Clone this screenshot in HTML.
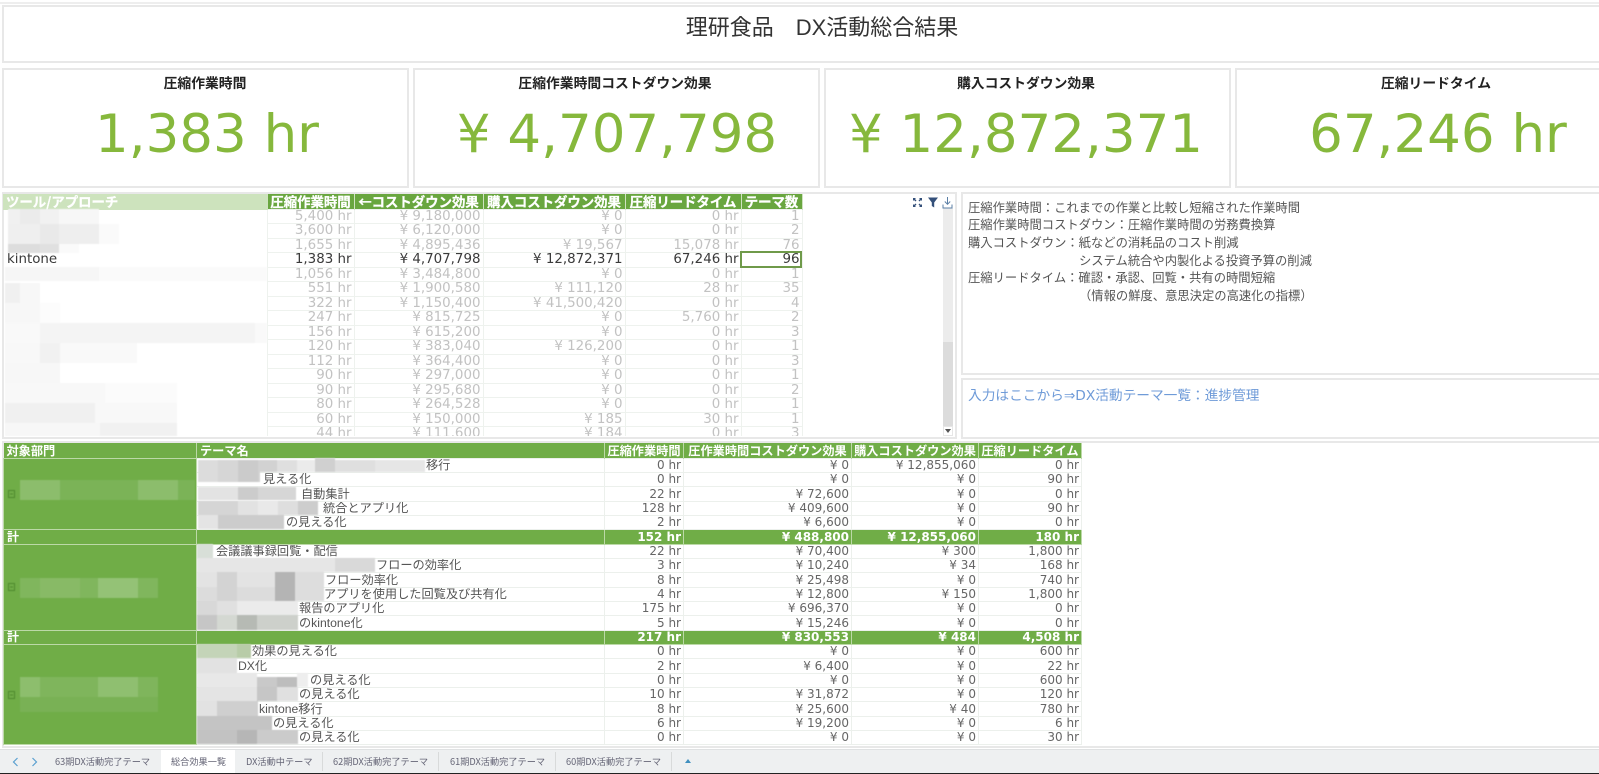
<!DOCTYPE html>
<html lang="ja"><head><meta charset="utf-8"><title>理研食品 DX活動総合結果</title>
<style>
html,body{margin:0;padding:0;width:1599px;height:774px;overflow:hidden;background:#fff;}
body{position:relative;font-family:"DejaVu Sans","Noto Sans CJK JP",sans-serif;color:#555;}
.a{position:absolute;box-sizing:border-box;}
.box{border:2px solid #e8e8e8;background:#fff;}
.kt{position:absolute;font:bold 13.8px "Liberation Sans","Noto Sans CJK JP",sans-serif;color:#222;text-align:center;top:72px;white-space:nowrap;transform:translateX(-50%);}
.kv{position:absolute;font-size:53px;line-height:60px;color:#86b83c;top:105px;white-space:nowrap;transform:translateX(-50%);}
table{border-collapse:collapse;table-layout:fixed;position:absolute;}
td,th{padding:0 2px 0 0;overflow:hidden;white-space:nowrap;box-sizing:border-box;}
#t1{left:3px;top:0;width:799px;font-size:13.4px;color:#c2c2c2;}
#t1 th{background:#69a63f;color:#fff;font:bold 13.4px "Noto Sans CJK JP",sans-serif;height:15px;line-height:15px;text-align:center;padding:0;border-right:1px solid #cfe3c0;-webkit-text-stroke:.25px #fff;}
#t1 th.f{background:#cde3bd;text-align:left;padding-left:3px;}
#t1 td{text-align:right;border:1px solid #eef2ee;line-height:12px;padding-right:2px;}
#t1 td:first-child{text-align:left;border:0;padding-left:4px;color:#444;}
#t1 tr.x{height:14px}#t1 tr.y{height:15px}
#t1 tr.k td{color:#3a3a3a;}
#t2{left:3px;top:443px;width:1078px;font-size:12px;color:#666;}
#t2 th{background:#70ad47;color:#fff;font:bold 12.2px "Noto Sans CJK JP",sans-serif;height:15px;line-height:14px;text-align:center;padding:0;border-right:1px solid #bcd9a7;}
#t2 th.l{text-align:left;padding-left:3px;}
#t2 td{text-align:right;border:1px solid #ecf0ec;line-height:12px;padding-right:2px;}
#t2 td.n{text-align:left;font:12.2px/12px "Liberation Sans","Noto Sans CJK JP",sans-serif;color:#555;}
#t2 td.g{background:#70ad47;border:1px solid #bcd9a7;}
#t2 tr.x{height:14px}#t2 tr.y{height:15px}
#t2 tr.s td{background:#70ad47;color:#fff;font-weight:bold;border-color:#bcd9a7;}
#t2 tr.s td.l{text-align:left;padding-left:3px;font:bold 12px/12px "Noto Sans CJK JP",sans-serif;}
.d{position:absolute;left:968px;font-size:12.3px;line-height:18px;color:#555;white-space:pre;}
.tab{position:absolute;top:750px;height:22px;line-height:22px;font-size:9.2px;color:#667;white-space:nowrap;font-family:"Noto Sans CJK JP",sans-serif;}
.sep{position:absolute;top:752px;width:1px;height:19px;background:#d8dada;}
</style></head><body>
<div class="a" style="left:0;top:2px;width:1599px;height:2px;background:#eee"></div>
<div class="a box" style="left:2px;top:5px;width:1600px;height:58px"></div>
<div class="a" style="left:0;top:13px;width:1644px;text-align:center;font:22px/30px 'Liberation Sans','Noto Sans CJK JP',sans-serif;color:#333">理研食品　DX活動総合結果</div>

<div class="a box" style="left:2px;top:68px;width:407px;height:120px"></div>
<div class="a box" style="left:413px;top:68px;width:407px;height:120px"></div>
<div class="a box" style="left:824px;top:68px;width:407px;height:120px"></div>
<div class="a box" style="left:1235px;top:68px;width:370px;height:120px"></div>
<div class="kt" style="left:205px">圧縮作業時間</div>
<div class="kt" style="left:615px">圧縮作業時間コストダウン効果</div>
<div class="kt" style="left:1026px">購入コストダウン効果</div>
<div class="kt" style="left:1436px">圧縮リードタイム</div>
<div class="kv" style="left:207px">1,383 hr</div>
<div class="kv" style="left:617px">¥ 4,707,798</div>
<div class="kv" style="left:1026px">¥ 12,872,371</div>
<div class="kv" style="left:1438px">67,246 hr</div>

<div class="a box" style="left:2px;top:192px;width:955px;height:247px"></div>
<div class="a" style="left:0;top:194px;width:943px;height:242px;overflow:hidden">
<table id="t1"><colgroup><col style="width:264px"><col style="width:87px"><col style="width:129px"><col style="width:142px"><col style="width:116px"><col style="width:61px"></colgroup>
<tr><th class="f">ツール/アプローチ</th><th>圧縮作業時間</th><th>←コストダウン効果</th><th>購入コストダウン効果</th><th>圧縮リードタイム</th><th>テーマ数</th></tr>
<tr class="x"><td></td><td>5,400 hr</td><td>¥ 9,180,000</td><td>¥ 0</td><td>0 hr</td><td>1</td></tr>
<tr class="y"><td></td><td>3,600 hr</td><td>¥ 6,120,000</td><td>¥ 0</td><td>0 hr</td><td>2</td></tr>
<tr class="x"><td></td><td>1,655 hr</td><td>¥ 4,895,436</td><td>¥ 19,567</td><td>15,078 hr</td><td>76</td></tr>
<tr class="y k"><td>kintone</td><td>1,383 hr</td><td>¥ 4,707,798</td><td>¥ 12,872,371</td><td>67,246 hr</td><td>96</td></tr>
<tr class="x"><td></td><td>1,056 hr</td><td>¥ 3,484,800</td><td>¥ 0</td><td>0 hr</td><td>1</td></tr>
<tr class="y"><td></td><td>551 hr</td><td>¥ 1,900,580</td><td>¥ 111,120</td><td>28 hr</td><td>35</td></tr>
<tr class="x"><td></td><td>322 hr</td><td>¥ 1,150,400</td><td>¥ 41,500,420</td><td>0 hr</td><td>4</td></tr>
<tr class="y"><td></td><td>247 hr</td><td>¥ 815,725</td><td>¥ 0</td><td>5,760 hr</td><td>2</td></tr>
<tr class="x"><td></td><td>156 hr</td><td>¥ 615,200</td><td>¥ 0</td><td>0 hr</td><td>3</td></tr>
<tr class="y"><td></td><td>120 hr</td><td>¥ 383,040</td><td>¥ 126,200</td><td>0 hr</td><td>1</td></tr>
<tr class="x"><td></td><td>112 hr</td><td>¥ 364,400</td><td>¥ 0</td><td>0 hr</td><td>3</td></tr>
<tr class="y"><td></td><td>90 hr</td><td>¥ 297,000</td><td>¥ 0</td><td>0 hr</td><td>1</td></tr>
<tr class="x"><td></td><td>90 hr</td><td>¥ 295,680</td><td>¥ 0</td><td>0 hr</td><td>2</td></tr>
<tr class="y"><td></td><td>80 hr</td><td>¥ 264,528</td><td>¥ 0</td><td>0 hr</td><td>1</td></tr>
<tr class="x"><td></td><td>60 hr</td><td>¥ 150,000</td><td>¥ 185</td><td>30 hr</td><td>1</td></tr>
<tr class="y"><td></td><td>44 hr</td><td>¥ 111,600</td><td>¥ 184</td><td>0 hr</td><td>3</td></tr>
</table></div>
<div class="a" style="left:740px;top:251px;width:62px;height:17px;border:2px solid #6f9a4a"></div>

<!-- top table redaction blocks -->
<svg class="a" style="left:0;top:0;filter:blur(.6px)" width="1100" height="750" viewBox="0 0 1100 750">
<g>
<rect x="8" y="209" width="12" height="15" fill="#f0f0f0"/><rect x="20" y="209" width="20" height="15" fill="#ebebeb"/><rect x="40" y="209" width="19" height="15" fill="#f1f1f1"/><rect x="59" y="209" width="40" height="15" fill="#f7f7f7"/>
<rect x="8" y="224" width="32" height="20" fill="#efefef"/><rect x="40" y="224" width="19" height="20" fill="#e9e9e9"/><rect x="59" y="224" width="40" height="20" fill="#eeeeee"/><rect x="99" y="224" width="20" height="20" fill="#fafafa"/>
<rect x="8" y="244" width="32" height="9" fill="#dddddd"/><rect x="40" y="244" width="19" height="9" fill="#e0e0e0"/><rect x="59" y="244" width="20" height="9" fill="#fafafa"/>
<rect x="5" y="267" width="262" height="14" fill="#fafafa"/><rect x="5" y="267" width="94" height="14" fill="#f6f6f6"/>
<rect x="5" y="283" width="15" height="20" fill="#f0f0f0"/><rect x="20" y="283" width="20" height="20" fill="#f7f7f7"/>
<rect x="5" y="303" width="35" height="20" fill="#f7f7f7"/><rect x="40" y="303" width="20" height="20" fill="#fcfcfc"/>
<rect x="5" y="323" width="262" height="20" fill="#f9f9f9"/><rect x="40" y="323" width="215" height="20" fill="#f4f4f4"/>
<rect x="5" y="343" width="35" height="20" fill="#f8f8f8"/><rect x="40" y="343" width="20" height="20" fill="#f1f1f1"/><rect x="60" y="343" width="77" height="20" fill="#f9f9f9"/>
<rect x="5" y="363" width="55" height="20" fill="#f7f7f7"/>
<rect x="5" y="383" width="100" height="20" fill="#f8f8f8"/><rect x="105" y="383" width="72" height="20" fill="#fbfbfb"/>
<rect x="5" y="403" width="90" height="20" fill="#f0f0f0"/><rect x="95" y="403" width="82" height="20" fill="#f8f8f8"/>
<rect x="5" y="423" width="95" height="13" fill="#f7f7f7"/><rect x="100" y="423" width="77" height="13" fill="#f1f1f1"/>
</g>
</svg>

<!-- scrollbar & icons -->
<div class="a" style="left:943px;top:208px;width:10px;height:134px;background:#ececec"></div>
<div class="a" style="left:943px;top:342px;width:10px;height:84px;background:#dcdcdc"></div>
<div class="a" style="left:943px;top:426px;width:10px;height:10px;background:#fff;border:1px solid #e6e6e6"></div>
<svg class="a" style="left:912px;top:195px" width="44" height="16" viewBox="0 0 44 16">
<path d="M1 3h3L3 4l1.500 1.500-1 1L2 5 1 6zM10 3H7l1 1-1.500 1.500 1 1L9 5l1 1zM1 12V9l1 1 1.500-1.500 1 1L3 11l1 1zM10 12V9L9 10 7.500 8.500l-1 1L8 11l-1 1z" fill="#34507a"/>
<path d="M16 2.500h10l-3.800 5V12.500l-2.400-1.500V7.500z" fill="#34507a"/>
<path d="M35.500 2v7M32.800 6.500l2.700 2.800 2.700-2.800M31 9.500v3.500h9V9.500" fill="none" stroke="#5b7fa6" stroke-width="1"/>
</svg>
<svg class="a" style="left:944px;top:428px" width="8" height="6" viewBox="0 0 8 6"><path d="M1 1h6L4 5z" fill="#555"/></svg>

<!-- right panels -->
<div class="a box" style="left:961px;top:192px;width:645px;height:183px"></div>
<div class="a box" style="left:961px;top:378px;width:645px;height:61px"></div>
<div class="d" style="top:199px">圧縮作業時間：これまでの作業と比較し短縮された作業時間</div>
<div class="d" style="top:216px">圧縮作業時間コストダウン：圧縮作業時間の労務費換算</div>
<div class="d" style="top:234px">購入コストダウン：紙などの消耗品のコスト削減</div>
<div class="d" style="top:252px;left:1079px">システム統合や内製化よる投資予算の削減</div>
<div class="d" style="top:269px">圧縮リードタイム：確認・承認、回覧・共有の時間短縮</div>
<div class="d" style="top:287px;left:1079px">（情報の鮮度、意思決定の高速化の指標）</div>
<div class="a" style="left:968px;top:386px;font-size:13.7px;line-height:20px;color:#6f9bd8;white-space:nowrap">入力はここから⇒DX活動テーマ一覧：進捗管理</div>

<!-- bottom table -->
<div class="a box" style="left:2px;top:441px;width:1605px;height:307px"></div>
<table id="t2"><colgroup><col style="width:193px"><col style="width:408px"><col style="width:79px"><col style="width:168px"><col style="width:127px"><col style="width:103px"></colgroup>
<tr><th class="l">対象部門</th><th class="l">テーマ名</th><th>圧縮作業時間</th><th>圧作業時間コストダウン効果</th><th>購入コストダウン効果</th><th>圧縮リードタイム</th></tr>
<tr class="x"><td class="g" rowspan="5"></td><td class="n" style="padding-left:229px">移行</td><td>0 hr</td><td>¥ 0</td><td>¥ 12,855,060</td><td>0 hr</td></tr>
<tr class="x"><td class="n" style="padding-left:66px">見える化</td><td>0 hr</td><td>¥ 0</td><td>¥ 0</td><td>90 hr</td></tr>
<tr class="y"><td class="n" style="padding-left:104px">自動集計</td><td>22 hr</td><td>¥ 72,600</td><td>¥ 0</td><td>0 hr</td></tr>
<tr class="x"><td class="n" style="padding-left:126px">統合とアプリ化</td><td>128 hr</td><td>¥ 409,600</td><td>¥ 0</td><td>90 hr</td></tr>
<tr class="x"><td class="n" style="padding-left:89px">の見える化</td><td>2 hr</td><td>¥ 6,600</td><td>¥ 0</td><td>0 hr</td></tr>
<tr class="y s"><td class="l">計</td><td></td><td>152 hr</td><td>¥ 488,800</td><td>¥ 12,855,060</td><td>180 hr</td></tr>
<tr class="x"><td class="g" rowspan="6"></td><td class="n" style="padding-left:19px">会議議事録回覧・配信</td><td>22 hr</td><td>¥ 70,400</td><td>¥ 300</td><td>1,800 hr</td></tr>
<tr class="x"><td class="n" style="padding-left:179px">フローの効率化</td><td>3 hr</td><td>¥ 10,240</td><td>¥ 34</td><td>168 hr</td></tr>
<tr class="y"><td class="n" style="padding-left:128px">フロー効率化</td><td>8 hr</td><td>¥ 25,498</td><td>¥ 0</td><td>740 hr</td></tr>
<tr class="x"><td class="n" style="padding-left:127px">アプリを使用した回覧及び共有化</td><td>4 hr</td><td>¥ 12,800</td><td>¥ 150</td><td>1,800 hr</td></tr>
<tr class="x"><td class="n" style="padding-left:102px">報告のアプリ化</td><td>175 hr</td><td>¥ 696,370</td><td>¥ 0</td><td>0 hr</td></tr>
<tr class="y"><td class="n" style="padding-left:102px">のkintone化</td><td>5 hr</td><td>¥ 15,246</td><td>¥ 0</td><td>0 hr</td></tr>
<tr class="x s"><td class="l">計</td><td></td><td>217 hr</td><td>¥ 830,553</td><td>¥ 484</td><td>4,508 hr</td></tr>
<tr class="x"><td class="g" rowspan="7"></td><td class="n" style="padding-left:55px">効果の見える化</td><td>0 hr</td><td>¥ 0</td><td>¥ 0</td><td>600 hr</td></tr>
<tr class="y"><td class="n" style="padding-left:41px">DX化</td><td>2 hr</td><td>¥ 6,400</td><td>¥ 0</td><td>22 hr</td></tr>
<tr class="x"><td class="n" style="padding-left:113px">の見える化</td><td>0 hr</td><td>¥ 0</td><td>¥ 0</td><td>600 hr</td></tr>
<tr class="x"><td class="n" style="padding-left:102px">の見える化</td><td>10 hr</td><td>¥ 31,872</td><td>¥ 0</td><td>120 hr</td></tr>
<tr class="y"><td class="n" style="padding-left:62px">kintone移行</td><td>8 hr</td><td>¥ 25,600</td><td>¥ 40</td><td>780 hr</td></tr>
<tr class="x"><td class="n" style="padding-left:76px">の見える化</td><td>6 hr</td><td>¥ 19,200</td><td>¥ 0</td><td>6 hr</td></tr>
<tr class="x"><td class="n" style="padding-left:102px">の見える化</td><td>0 hr</td><td>¥ 0</td><td>¥ 0</td><td>30 hr</td></tr>
</table>

<!-- bottom redaction blocks -->
<svg class="a" style="left:0;top:0;filter:blur(.6px)" width="1100" height="750" viewBox="0 0 1100 750">
<g>
<!-- group 1 dept -->
<rect x="20" y="480" width="175" height="20" fill="#7bb357"/><rect x="20" y="480" width="40" height="20" fill="#8cbd6c"/><rect x="138" y="480" width="40" height="20" fill="#8cbd6c"/>
<!-- group 2 dept -->
<rect x="20" y="578" width="138" height="20" fill="#80b65d"/><rect x="98" y="578" width="40" height="20" fill="#94c276"/><rect x="40" y="578" width="40" height="20" fill="#88ba66"/>
<!-- group 3 dept -->
<rect x="20" y="677" width="138" height="20" fill="#7fb55c"/><rect x="20" y="677" width="20" height="20" fill="#8dbe6d"/><rect x="98" y="677" width="40" height="20" fill="#8fbf70"/>
<rect x="20" y="697" width="138" height="15" fill="#79b155"/>
<!-- group 1 rows -->
<rect x="198" y="460" width="20" height="22" fill="#dcdcdc"/><rect x="218" y="460" width="20" height="22" fill="#d6d6d6"/><rect x="238" y="460" width="20" height="22" fill="#cbcbcb"/><rect x="258" y="460" width="2" height="22" fill="#d2d2d2"/>
<rect x="258" y="460" width="19" height="12" fill="#d2d2d2"/><rect x="277" y="460" width="20" height="12" fill="#dfdfdf"/><rect x="297" y="460" width="18" height="12" fill="#ebebeb"/><rect x="315" y="458" width="20" height="14" fill="#d0d0d0"/><rect x="335" y="460" width="40" height="12" fill="#dfdfdf"/><rect x="375" y="460" width="50" height="12" fill="#e6e6e6"/>
<rect x="198" y="487" width="40" height="13" fill="#e3e3e3"/><rect x="238" y="487" width="20" height="13" fill="#cccccc"/><rect x="258" y="487" width="38" height="13" fill="#d6d6d6"/>
<rect x="198" y="501" width="40" height="14" fill="#d5d5d5"/><rect x="238" y="501" width="20" height="14" fill="#e2e2e2"/><rect x="258" y="501" width="20" height="14" fill="#e9e9e9"/><rect x="278" y="501" width="20" height="14" fill="#dedede"/><rect x="298" y="501" width="20" height="14" fill="#cdcdcd"/>
<rect x="198" y="515" width="20" height="14" fill="#e4e4e4"/><rect x="218" y="515" width="66" height="14" fill="#cccccc"/>
<!-- group 2 rows -->
<rect x="197" y="544" width="16" height="14" fill="#d8dfd8"/>
<rect x="197" y="558" width="178" height="14" fill="#e6e6e6"/><rect x="335" y="558" width="40" height="14" fill="#d9d9d9"/>
<rect x="197" y="572" width="127" height="15" fill="#e3e3e3"/><rect x="197" y="587" width="127" height="14" fill="#dcdcdc"/><rect x="217" y="572" width="20" height="29" fill="#d3d3d3"/><rect x="275" y="572" width="20" height="29" fill="#b4b4b4"/><rect x="295" y="572" width="29" height="29" fill="#dddddd"/>
<rect x="197" y="601" width="20" height="14" fill="#d8d8d8"/><rect x="217" y="601" width="20" height="14" fill="#e0e0e0"/><rect x="237" y="601" width="61" height="14" fill="#ebebeb"/>
<rect x="197" y="615" width="20" height="15" fill="#c6c6c6"/><rect x="217" y="615" width="20" height="15" fill="#d4d8d2"/><rect x="237" y="615" width="20" height="15" fill="#b6bab4"/><rect x="257" y="615" width="41" height="15" fill="#cdd0cb"/>
<!-- group 3 rows -->
<rect x="197" y="644" width="40" height="14" fill="#c4d4b8"/><rect x="237" y="644" width="14" height="14" fill="#b8cca8"/>
<rect x="197" y="658" width="40" height="15" fill="#e2e2e2"/>
<rect x="197" y="673" width="60" height="14" fill="#e8e8e8"/><rect x="257" y="677" width="20" height="10" fill="#c9c9c9"/><rect x="277" y="677" width="20" height="10" fill="#bdbdbd"/><rect x="297" y="673" width="11" height="14" fill="#eeeeee"/>
<rect x="197" y="687" width="60" height="14" fill="#e4e4e4"/><rect x="257" y="687" width="20" height="14" fill="#c6c6c6"/><rect x="277" y="687" width="21" height="14" fill="#e0e0e0"/>
<rect x="197" y="701" width="20" height="15" fill="#e2e2e2"/><rect x="217" y="701" width="41" height="15" fill="#cfcfcf"/>
<rect x="197" y="716" width="75" height="14" fill="#c4c4c4"/>
<rect x="197" y="730" width="40" height="14" fill="#c2c2c2"/><rect x="237" y="730" width="20" height="14" fill="#b6b6b6"/><rect x="257" y="730" width="41" height="14" fill="#cbcbcb"/>
</g>
<!-- collapse icons -->
<g fill="none" stroke="#4f8a2e" stroke-width="1">
<rect x="8.500" y="490.500" width="6" height="7"/><path d="M10 494h3"/>
<rect x="8.500" y="583.500" width="6" height="7"/><path d="M10 587h3"/>
<rect x="8.500" y="691.500" width="6" height="7"/><path d="M10 695h3"/>
</g>
</svg>

<!-- tab bar -->
<div class="a" style="left:0;top:749px;width:1599px;height:24px;background:#eef0f1;border-top:1px solid #dfe1e2"></div>
<div class="a" style="left:0;top:773px;width:1599px;height:1px;background:#222"></div>
<div class="a" style="left:161px;top:750px;width:74px;height:23px;background:#fff"></div>
<svg class="a" style="left:10px;top:755px" width="32" height="14" viewBox="0 0 32 14"><path d="M7.500 3L3.500 7l4 4M22.500 3l4 4-4 4" fill="none" stroke="#5aa0d0" stroke-width="1.200"/></svg>
<div class="tab" style="left:55px">63期DX活動完了テーマ</div>
<div class="tab" style="left:171px">総合効果一覧</div>
<div class="tab" style="left:246px">DX活動中テーマ</div>
<div class="tab" style="left:333px">62期DX活動完了テーマ</div>
<div class="tab" style="left:450px">61期DX活動完了テーマ</div>
<div class="tab" style="left:566px">60期DX活動完了テーマ</div>
<div class="sep" style="left:322px"></div><div class="sep" style="left:438px"></div><div class="sep" style="left:555px"></div><div class="sep" style="left:671px"></div>
<svg class="a" style="left:684px;top:758px" width="8" height="6" viewBox="0 0 8 6"><path d="M4 1l3 4H1z" fill="#3f8fbf"/></svg>
</body></html>
